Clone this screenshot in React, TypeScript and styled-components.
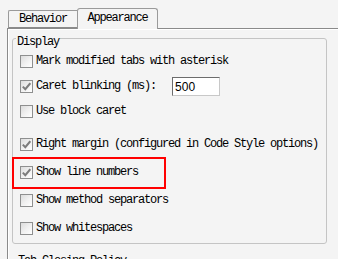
import styled, { createGlobalStyle } from "styled-components";
import { FC } from "react";

const GlobalStyle = createGlobalStyle`
  html, body {
    margin: 0;
    padding: 0;
    background: #f4f4f4;
  }
`;

const Page = styled.div`
  width: 338px;
  height: 259px;
  overflow: hidden;
  padding-top: 8px;
  box-sizing: border-box;
  background: #f4f4f4;
  font-family: "Liberation Mono", "DejaVu Sans Mono", monospace;
  font-size: 12px;
  letter-spacing: -1.2px;
  color: #000;
`;

const TabStrip = styled.div`
  display: flex;
  align-items: flex-end;
  height: 20px;
  padding-left: 8px;
  position: relative;
  z-index: 1;
`;

const Tab = styled.div<{ $selected?: boolean }>`
  box-sizing: border-box;
  display: flex;
  align-items: center;
  justify-content: center;
  width: ${(p) => (p.$selected ? "81px" : "69px")};
  height: ${(p) => (p.$selected ? "21px" : "18px")};
  margin-bottom: ${(p) => (p.$selected ? "-1px" : "0")};
  padding-bottom: ${(p) => (p.$selected ? "2px" : "0")};
  border: 1px solid #9a9a9a;
  border-bottom: ${(p) => (p.$selected ? "none" : "1px solid #8a8a8a")};
  border-right: ${(p) => (p.$selected ? "1px solid #9a9a9a" : "none")};
  border-radius: ${(p) => (p.$selected ? "3px 3px 0 0" : "2px 0 0 0")};
  background: #f4f4f4;
`;

const Pane = styled.div`
  margin-left: 7px;
  border-top: 1px solid #8a8a8a;
  border-left: 1px solid #8a8a8a;
  box-shadow: inset 1px 1px 0 #ffffff;
  padding: 9px 0 0 4px;
  height: 260px;
`;

const Group = styled.div`
  position: relative;
  width: 315px;
  box-sizing: border-box;
  border: 1px solid #c4c4c4;
  border-radius: 3px;
  padding: 13px 0 5px 8px;
  display: flex;
  flex-direction: column;
`;

const GroupTitle = styled.span`
  position: absolute;
  top: -3px;
  left: 3px;
  padding: 0 1px 0 1px;
  line-height: 12px;
  background: #f4f4f4;
`;

const Row = styled.label<{ $space: number; $highlight?: boolean }>`
  position: relative;
  display: flex;
  align-items: center;
  height: 19px;
  margin-top: ${(p) => p.$space}px;

  ${(p) =>
    p.$highlight &&
    `
    &::after {
      content: "";
      position: absolute;
      left: -9px;
      top: -6px;
      width: 154px;
      height: 32px;
      box-sizing: border-box;
      border: 2px solid #ff0000;
      pointer-events: none;
    }
  `}
`;

const Box = styled.span`
  box-sizing: border-box;
  width: 13px;
  height: 13px;
  margin-left: -1px;
  margin-right: 3px;
  border: 1px solid #8e8f8f;
  background: linear-gradient(135deg, #dcdcdc 0%, #f0f0f0 50%, #ffffff 100%);
  display: flex;
  align-items: center;
  justify-content: center;
  flex-shrink: 0;
`;

const Label = styled.span`
  white-space: nowrap;
  line-height: 13px;
`;

const NumberField = styled.input`
  box-sizing: border-box;
  width: 48px;
  height: 19px;
  margin-left: 16px;
  padding: 0 2px;
  border: 1px solid;
  border-color: #6c6c6c #c8c8c8 #c8c8c8 #6c6c6c;
  background: #fff;
  font-family: "Liberation Sans", Arial, sans-serif;
  font-size: 12px;
  letter-spacing: 0;
  color: #000;
  outline: none;
`;

const SectionTitle = styled.div`
  margin-top: 11px;
  padding-left: 6px;
  line-height: 12px;
  white-space: nowrap;
`;

const Check: FC<{ checked?: boolean }> = ({ checked }) => (
  <Box>
    {checked && (
      <svg width="9" height="9" viewBox="0 0 9 9">
        <path
          d="M0.8 4.6 L3.3 7.2 L8.3 1.2"
          fill="none"
          stroke="#7c7c7c"
          strokeWidth="2"
          strokeLinejoin="miter"
        />
      </svg>
    )}
  </Box>
);

const options = [
  { label: "Mark modified tabs with asterisk", checked: false, space: 0 },
  { label: "Caret blinking (ms):", checked: true, space: 6, field: "500" },
  { label: "Use block caret", checked: false, space: 6 },
  { label: "Right margin (configured in Code Style options)", checked: true, space: 14 },
  { label: "Show line numbers", checked: true, space: 9, highlight: true },
  { label: "Show method separators", checked: false, space: 9 },
  { label: "Show whitespaces", checked: false, space: 9 },
];

const App: FC = () => (
  <>
    <GlobalStyle />
    <Page>
      <TabStrip>
        <Tab>Behavior</Tab>
        <Tab $selected>Appearance</Tab>
      </TabStrip>
      <Pane>
        <Group>
          <GroupTitle>Display</GroupTitle>
          {options.map((o) => (
            <Row key={o.label} $space={o.space} $highlight={o.highlight}>
              <Check checked={o.checked} />
              <Label>{o.label}</Label>
              {o.field && <NumberField defaultValue={o.field} />}
            </Row>
          ))}
        </Group>
        <SectionTitle>Tab Closing Policy</SectionTitle>
      </Pane>
    </Page>
  </>
);

export default App;
